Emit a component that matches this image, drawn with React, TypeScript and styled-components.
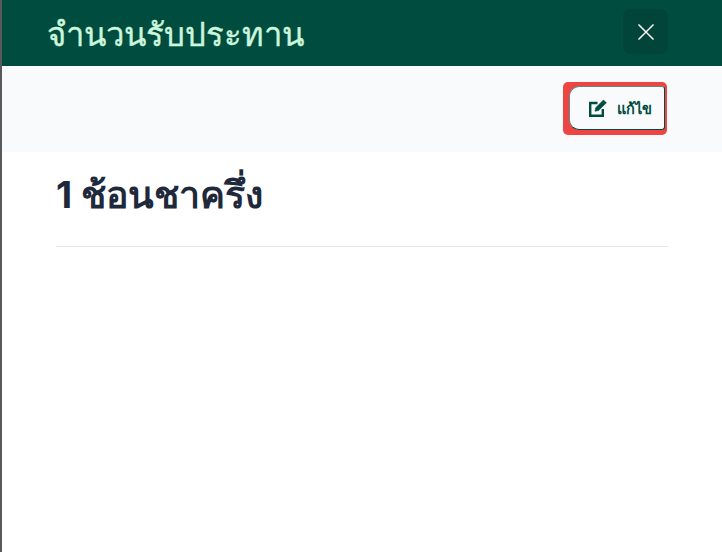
import styled, { createGlobalStyle } from 'styled-components';

const GlobalStyle = createGlobalStyle`
  html, body {
    margin: 0;
    height: 100%;
    background: #fff;
  }
  #root {
    height: 100%;
  }
`;

const Page = styled.div`
  display: flex;
  height: 552px;
  overflow: hidden;
  font-family: Inter, 'Liberation Sans', 'Noto Sans', sans-serif;
`;

const Edge = styled.div`
  width: 2px;
  flex: none;
  background: #595959;
`;

const Panel = styled.div`
  flex: 1;
  display: flex;
  flex-direction: column;
`;

const Header = styled.header`
  height: 66px;
  flex: none;
  display: flex;
  align-items: center;
  justify-content: space-between;
  padding: 0 54px 0 45px;
  background: #004d40;
`;

const Title = styled.h2`
  margin: 0 0 -1px;
  font-size: 32.8px;
  font-weight: 500;
  color: #ccf5dc;
  -webkit-text-stroke: 0.35px #ccf5dc;
`;

const CloseButton = styled.button`
  width: 45px;
  height: 45px;
  margin-top: -3px;
  display: flex;
  align-items: center;
  justify-content: center;
  padding: 0;
  border: 0;
  border-radius: 8px;
  background: #00443a;
  color: #fff;
`;

const Toolbar = styled.div`
  height: 86px;
  flex: none;
  display: flex;
  align-items: center;
  justify-content: flex-end;
  padding: 0 55px 0 0;
  background: #f9fafb;
`;

const EditFrame = styled.div`
  width: 104px;
  height: 53px;
  margin-top: -1px;
  display: flex;
  padding: 4px 2px 5px 6px;
  box-sizing: border-box;
  border-radius: 5px;
  background: #ef4444;
`;

const EditButton = styled.button`
  flex: 1;
  display: flex;
  align-items: center;
  justify-content: center;
  gap: 10px;
  padding: 0 0 0 6px;
  border: 1px solid;
  border-color: #5f8a82 #004d40 #004d40 #5f8a82;
  border-radius: 10px 3px 3px 10px;
  background: #f9fafb;
  color: #004d40;
  font-family: inherit;
  font-size: 14.5px;
  font-weight: 700;
`;

const Content = styled.main`
  padding: 20px 54px 0 54px;
`;

const Amount = styled.h3`
  margin: 0;
  padding-bottom: 28px;
  border-bottom: 1px solid #e2e8f0;
  font-size: 37.4px;
  line-height: 46px;
  font-weight: 700;
  color: #1e293b;
`;

const App = () => (
  <>
    <GlobalStyle />
    <Page>
      <Edge />
      <Panel>
        <Header>
          <Title>จำนวนรับประทาน</Title>
          <CloseButton aria-label="Close">
            <svg width="18" height="18" viewBox="0 0 18 18" fill="none" stroke="currentColor" strokeWidth="1.5">
              <path d="M1.5 1.5l15 15M16.5 1.5l-15 15" />
            </svg>
          </CloseButton>
        </Header>
        <Toolbar>
          <EditFrame>
            <EditButton>
              <svg width="19" height="19" viewBox="0 0 19 19" fill="none" stroke="currentColor" strokeWidth="2.4">
                <path d="M9.5 4H2.2v12.8h12.6V10" />
                <path d="M7 12.2l.7-3.4L15.4 1l3 2.8-7.8 7.7z" fill="currentColor" strokeWidth="0.6" />
              </svg>
              <span>แก้ไข</span>
            </EditButton>
          </EditFrame>
        </Toolbar>
        <Content>
          <Amount>1 ช้อนชาครึ่ง</Amount>
        </Content>
      </Panel>
    </Page>
  </>
);

export default App;
